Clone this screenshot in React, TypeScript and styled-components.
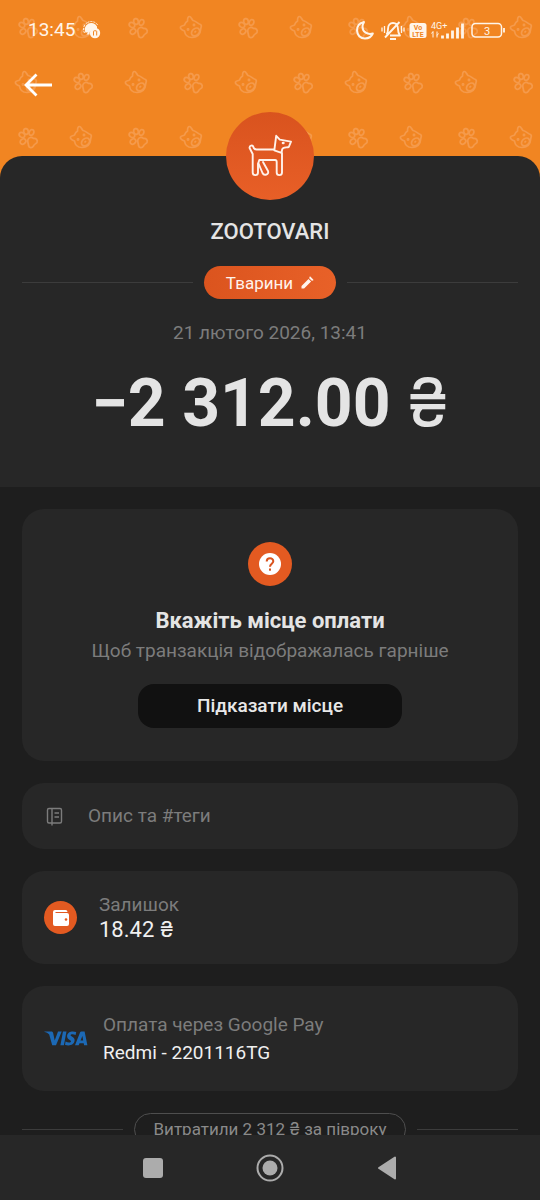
import React from "react";
import styled, { createGlobalStyle } from "styled-components";

const Global = createGlobalStyle`
  *, *::before, *::after { box-sizing: border-box; }
  body { margin: 0; background: #1e1e1e; }
  body, button, input { font-family: Roboto, Inter, "Noto Sans", sans-serif; }
  h1, h2, p { margin: 0; font-weight: 400; }
`;

const Screen = styled.div`
  height: 100vh;
  display: flex;
  flex-direction: column;
  color: #e4e4e4;
  background: #1e1e1e;
`;

const Content = styled.main`
  flex: 1;
  min-height: 0;
  overflow-y: auto;
  scrollbar-width: none;
`;

const Hero = styled.section`
  position: relative;
  isolation: isolate;
  background: #f18522;
`;

const HeroPattern = styled.svg`
  position: absolute;
  inset: 0;
  z-index: -1;
  width: 100%;
  height: 100%;
`;

const StatusBar = styled.div`
  display: flex;
  align-items: center;
  height: 60px;
  padding: 0 33px 0 28px;
  color: #fff5ea;
`;

const Clock = styled.time`
  font-size: 19px;
  line-height: 24px;
  margin-right: 8px;
`;

const StatusIcons = styled.div`
  display: flex;
  align-items: center;
  margin-left: auto;
`;

const AppBar = styled.header`
  display: flex;
  align-items: center;
  height: 50px;
  padding: 0 16px;
  margin-bottom: 46px;
`;

const BackButton = styled.button`
  display: grid;
  place-items: center;
  width: 44px;
  height: 44px;
  padding: 0;
  border: 0;
  background: none;
  color: #fff;
`;

const Sheet = styled.div`
  display: flex;
  flex-direction: column;
  align-items: center;
  padding: 0 22px 43px;
  border-radius: 22px 22px 0 0;
  background: #272727;
`;

const Avatar = styled.div`
  display: grid;
  place-items: center;
  width: 88px;
  height: 88px;
  margin-top: -44px;
  border-radius: 50%;
  background: linear-gradient(#d9531e, #e85f27);
`;

const Merchant = styled.h1`
  margin-top: 18px;
  font-size: 22px;
  line-height: 28px;
  font-weight: 500;
`;

const RuledRow = styled.div<{ $top: number }>`
  display: flex;
  align-items: center;
  align-self: stretch;
  gap: 11px;
  margin-top: ${(p) => p.$top}px;

  &::before, &::after {
    content: "";
    flex: 1;
    height: 1px;
    background: #3c3c3c;
  }
`;

const CategoryButton = styled.button`
  display: flex;
  align-items: center;
  gap: 8px;
  height: 33px;
  padding: 0 22px;
  border: 0;
  border-radius: 17px;
  background: linear-gradient(90deg, #db541e, #e86128);
  color: #fff3ec;
  font-size: 17px;
  line-height: 24px;
`;

const DateLine = styled.p`
  margin-top: 20px;
  font-size: 19px;
  line-height: 28px;
  color: #7c7c7c;
`;

const Amount = styled.p`
  margin-top: 15px;
  font-size: 66px;
  line-height: 80px;
  font-weight: 700;
  white-space: nowrap;
`;

const Currency = styled.span`
  font-family: Inter, sans-serif;
  font-weight: 400;
`;

const Cards = styled.div`
  display: flex;
  flex-direction: column;
  gap: 22px;
  padding: 22px 22px 0;
`;

const PlaceCard = styled.section`
  display: flex;
  flex-direction: column;
  align-items: center;
  padding: 33px 22px;
  border-radius: 22px;
  background: #272727;
`;

const RoundIcon = styled.div<{ $size: number }>`
  display: grid;
  place-items: center;
  flex: none;
  width: ${(p) => p.$size}px;
  height: ${(p) => p.$size}px;
  border-radius: 50%;
  background: #e35a21;
`;

const PlaceTitle = styled.h2`
  margin-top: 20px;
  font-size: 22px;
  line-height: 30px;
  font-weight: 700;
`;

const PlaceHint = styled.p`
  font-size: 19px;
  line-height: 30px;
  color: #7c7c7c;
`;

const PlaceButton = styled.button`
  width: 264px;
  height: 44px;
  margin-top: 18px;
  border: 0;
  border-radius: 16px;
  background: #111;
  color: #e8e8e8;
  font-size: 19px;
  line-height: 28px;
  font-weight: 500;
`;

const RowCard = styled.section<{ $height: number; $gap: number }>`
  display: flex;
  align-items: center;
  gap: ${(p) => p.$gap}px;
  min-height: ${(p) => p.$height}px;
  padding: 0 22px;
  border-radius: 22px;
  background: #272727;
`;

const NoteRow = styled(RowCard).attrs({ as: "label" })`
  color: #7c7c7c;
`;

const NoteInput = styled.input`
  flex: 1;
  min-width: 0;
  padding: 0;
  border: 0;
  outline: 0;
  background: none;
  color: #e4e4e4;
  font-size: 19px;
  line-height: 28px;

  &::placeholder { color: #7c7c7c; opacity: 1; }
`;

const RowLabel = styled.p`
  font-size: 19px;
  line-height: 24px;
  color: #7c7c7c;
`;

const RowValue = styled.p<{ $size: number; $line: number }>`
  font-size: ${(p) => p.$size}px;
  line-height: ${(p) => p.$line}px;
  color: #f0f0f0;
`;

const PaymentInfo = styled.div`
  padding-top: 4px;
`;

const SpentPill = styled.p`
  height: 33px;
  padding: 0 19px;
  border: 1px solid #4e4e4e;
  border-radius: 17px;
  font-size: 17px;
  line-height: 31px;
  color: #8a8a8a;
`;

const NavBar = styled.nav`
  display: flex;
  flex: none;
  justify-content: center;
  align-items: center;
  gap: 73px;
  height: 65px;
  background: #272727;
`;

const NavButton = styled.button`
  display: grid;
  place-items: center;
  width: 44px;
  height: 44px;
  padding: 0;
  border: 0;
  background: none;
  color: #acacac;
`;

function Paw({ x, y }: { x: number; y: number }) {
  return (
    <g transform={`translate(${x} ${y})`}>
      <ellipse cx="-6" cy="-3" rx="3" ry="2.300" transform="rotate(35 -6 -3)" />
      <ellipse cx="-2" cy="-6.500" rx="2.300" ry="2.900" transform="rotate(-12 -2 -6.500)" />
      <ellipse cx="3.500" cy="-5.500" rx="2.300" ry="3" transform="rotate(25 3.500 -5.500)" />
      <ellipse cx="-5" cy="3.500" rx="3" ry="2.400" transform="rotate(-35 -5 3.500)" />
      <path d="M0 1.500C1 -1 4 -1 5.500 .5C8 0 10 2 9 4.500C8 6 6 6 5.500 8C4 10.500 1 10 .5 7.500C.5 5 -1 4 0 1.500Z" />
    </g>
  );
}

function Pup({ x, y }: { x: number; y: number }) {
  return (
    <g transform={`translate(${x} ${y})`}>
      <path d="M-3.500 -7C-3.500 -9 -3 -11.500 -1.500 -11.500C0 -11.500 .5 -9 2 -7.500C5 -7 7 -4 9.500 -3.500C11.500 -2.500 9.500 0 9.500 2C9.500 6 6 9.500 1 9.500C-3 9.500 -6 7 -6.500 3C-8 2.500 -11 1 -10.500 -1C-10 -2.500 -7.500 -2 -6.500 -3C-6 -5 -5 -6 -3.500 -7Z" />
      <ellipse cx="4.500" cy="4" rx="4.500" ry="3.300" transform="rotate(-40 4.500 4)" />
      <circle cx="-3" cy="1.500" r=".6" />
      <circle cx="3" cy="-3" r=".6" />
      <path d="M3.500 4.500l1.500 -1.500" />
    </g>
  );
}

function Pattern() {
  return (
    <HeroPattern aria-hidden="true">
      <defs>
        <pattern id="pets" width="110" height="110" patternUnits="userSpaceOnUse">
          <g fill="none" stroke="#f59a4b" strokeWidth="1.700" strokeLinejoin="round">
            <Paw x={28} y={28} />
            <Pup x={81} y={28} />
            <Pup x={26} y={83} />
            <Paw x={83} y={83} />
          </g>
        </pattern>
      </defs>
      <rect width="100%" height="100%" fill="url(#pets)" />
    </HeroPattern>
  );
}

function NotificationIcon() {
  return (
    <svg width="18" height="18" viewBox="0 0 18 18" fill="currentColor">
      <path d="M1.500 12A7.600 7.600 0 0 1 15 4.500" fill="none" stroke="currentColor" strokeWidth="1" strokeDasharray="2 1" />
      <path d="M2.500 11.500A6 6 0 0 1 14 5.500L14 8A6 6 0 0 0 6.300 13.500H3.500L5 11.500Z" />
      <circle cx="12" cy="12" r="5.200" />
      <path d="M10.500 14.500V10.500Q10.500 9.800 11.200 9.800H13Q13.700 9.800 13.700 10.500V14.500" fill="none" stroke="#f18522" strokeWidth="1" />
    </svg>
  );
}

function SystemIcons() {
  return (
    <svg width="152" height="24" viewBox="0 0 152 24" fill="none" stroke="currentColor" role="img" aria-label="Не турбувати, без звуку, VoLTE, 4G+, батарея 3%">
      <path d="M9 4C4.500 5 2 8.500 2 12.500C2 17 5.500 20.500 10 20.500C13.500 20.500 16.500 18.500 17.800 15.500C12.500 17 7.500 14 7.500 9C7.500 7 8 5.500 9 4Z" strokeWidth="2" strokeLinejoin="round" />
      <path d="M31.500 16.500C33 15 33 13.500 33 11C33 7.500 35 5 38 5C41 5 43 7.500 43 11C43 14 43.500 15.500 45 17.500H35M35 21h6M30 19.500L44.500 4" strokeWidth="1.900" strokeLinejoin="round" />
      <path d="M27 9.500v4M29.500 8v7M46.500 8v7M49 9.500v4" strokeWidth="1.300" />
      <rect x="54.500" y="5" width="17" height="15" rx="2.500" fill="currentColor" stroke="none" />
      <text x="63" y="12" fontSize="7" fontWeight="700" fill="#f18522" stroke="none" textAnchor="middle">Vo</text>
      <text x="63" y="18.500" fontSize="7" fontWeight="700" fill="#f18522" stroke="none" textAnchor="middle">LTE</text>
      <text x="76" y="10.500" fontSize="9" fill="currentColor" stroke="none">4G+</text>
      <path d="M78 13.500v6M76.500 15.500L78 13.500M82 19.500v-6M83.500 15.500L82 17.500" strokeWidth="1" />
      <path d="M87.500 20.500v-3M92.500 20.500v-5M97.500 20.500v-8M102.500 20.500v-11M107.500 20.500v-15" strokeWidth="2.800" />
      <rect x="117" y="5.500" width="29.500" height="13.500" rx="3.500" strokeWidth="1.500" />
      <path d="M149 10v4.500" strokeWidth="1.800" />
      <text x="132" y="16.500" fontSize="11" fill="currentColor" stroke="none" textAnchor="middle">3</text>
    </svg>
  );
}

function Dog() {
  return (
    <svg width="44" height="44" viewBox="0 0 44 44" fill="none" stroke="#fff2ea" strokeWidth="1.900" strokeLinejoin="round" strokeLinecap="round">
      <path d="M26.300 15.500H8.500C6.500 15.500 6 15 5.300 12.700C4.700 10.700 1.200 11.500 1.600 14L4.700 20V38.500C4.700 42 10 42 10 38.500V30L11.300 26H27C28.300 26 28.700 27 28.700 28V38.500C28.700 42 34 42 34 38.500V19.200" />
      <path d="M10.500 29.500L14.500 39C16 42.300 21.500 40.500 20 37L15 28" />
      <path d="M28.200 1.800L31.800 5.600L43 7.600L40.800 13C38 13.700 35 12.800 34.200 15.300L33.500 18.800L26.300 16.300Z" />
      <path d="M35 9h.4" strokeWidth="2.600" />
    </svg>
  );
}

function Visa() {
  return (
    <svg width="44" height="15" viewBox="0 0 44 15" fill="#1c69b5" role="img" aria-label="Visa">
      <path d="M.5 .6H7.300C8.300 .6 9 1.200 9.200 2.200L10.700 9.500L14 .6H17.700L12 14.200H8.200L5.200 3.400C3.800 2.200 2.300 1.400 .5 1.100Z" />
      <path d="M19 .6H22.500L19.900 14.200H16.400Z" />
      <path d="M32.200 1L31.600 4C29.600 3.200 26.700 2.900 26.600 4.300C26.500 5.600 31 6 30.600 9.600C30.100 14.400 24.800 15.200 21 13.700L21.600 10.600C24 11.900 27 11.900 27 10.300C27 8.700 22.800 8.500 23.100 4.800C23.500 .7 28.300 -.4 32.200 1Z" />
      <path fillRule="evenodd" d="M37.400 .6H40.600L43.400 14.200H40.100L39.700 12.200H35.500L34.700 14.200H31L36 1.600C36.300 .9 36.800 .6 37.400 .6ZM38.400 5L36.500 9.500H39.200Z" />
    </svg>
  );
}

export default function App() {
  return (
    <Screen>
      <Global />
      <Content>
        <Hero>
          <Pattern />
          <StatusBar>
            <Clock>13:45</Clock>
            <NotificationIcon />
            <StatusIcons>
              <SystemIcons />
            </StatusIcons>
          </StatusBar>
          <AppBar>
            <BackButton aria-label="Назад">
              <svg width="30" height="24" viewBox="0 0 30 24" fill="none" stroke="currentColor" strokeWidth="2.800">
                <path d="M29 12H3M13.500 1.500L3 12L13.500 22.500" />
              </svg>
            </BackButton>
          </AppBar>
          <Sheet>
            <Avatar>
              <Dog />
            </Avatar>
            <Merchant>ZOOTOVARI</Merchant>
            <RuledRow $top={20}>
              <CategoryButton>
                Тварини
                <svg width="13" height="13" viewBox="0 0 13 13" fill="currentColor" aria-hidden="true">
                  <path d="M.5 9.900V12.500H3.100L10.100 5.500L7.500 2.900ZM12.200 3.400L9.600 .8C9.300 .5 8.900 .5 8.600 .8L8.200 2.200L10.800 4.800L12.200 4.400C12.500 4.100 12.500 3.700 12.200 3.400Z" />
                </svg>
              </CategoryButton>
            </RuledRow>
            <DateLine>21 лютого 2026, 13:41</DateLine>
            <Amount>
              −2 312.00 <Currency>₴</Currency>
            </Amount>
          </Sheet>
        </Hero>

        <Cards>
          <PlaceCard>
            <RoundIcon $size={44}>
              <svg width="22" height="22" viewBox="0 0 22 22" aria-hidden="true">
                <circle cx="11" cy="11" r="11" fill="#fff" />
                <path d="M7.700 8.500C7.700 4.200 14.300 4.200 14.300 8.300C14.300 10.700 11 10.900 11 13.800" fill="none" stroke="#d9531e" strokeWidth="2" />
                <rect x="10" y="15.500" width="2" height="2.200" fill="#d9531e" />
              </svg>
            </RoundIcon>
            <PlaceTitle>Вкажіть місце оплати</PlaceTitle>
            <PlaceHint>Щоб транзакція відображалась гарніше</PlaceHint>
            <PlaceButton>Підказати місце</PlaceButton>
          </PlaceCard>

          <NoteRow $height={66} $gap={22}>
            <svg width="22" height="22" viewBox="0 0 22 22" fill="none" stroke="currentColor" strokeWidth="1.400" aria-hidden="true">
              <path d="M5 3.500H16Q17.500 3.500 17.500 5V16.500Q17.500 18 16 18H5Q3.500 18 3.500 16.500V5Q3.500 3.500 5 3.500ZM8 3.500V20.500M10.500 8H15M10.500 12H15" />
            </svg>
            <NoteInput aria-label="Опис та #теги" placeholder="Опис та #теги" />
          </NoteRow>

          <RowCard $height={93} $gap={22}>
            <RoundIcon $size={33}>
              <svg width="18" height="18" viewBox="0 0 18 18" aria-hidden="true">
                <path d="M3 1H13.500Q15.500 1 15.500 3H3.500V4H15Q17 4 17 6V15Q17 17 15 17H3Q1 17 1 15V3Q1 1 3 1Z" fill="#fff" />
                <circle cx="14" cy="10.500" r="1.300" fill="#e35a21" />
              </svg>
            </RoundIcon>
            <div>
              <RowLabel>Залишок</RowLabel>
              <RowValue $size={22} $line={24}>
                18.42 <Currency>₴</Currency>
              </RowValue>
            </div>
          </RowCard>

          <RowCard $height={105} $gap={15}>
            <Visa />
            <PaymentInfo>
              <RowLabel>Оплата через Google Pay</RowLabel>
              <RowValue $size={19} $line={32}>Redmi - 2201116TG</RowValue>
            </PaymentInfo>
          </RowCard>

          <RuledRow $top={0}>
            <SpentPill>
              Витратили 2 312 <Currency>₴</Currency> за півроку
            </SpentPill>
          </RuledRow>
        </Cards>
      </Content>

      <NavBar>
        <NavButton aria-label="Останні програми">
          <svg width="20" height="20"><rect width="20" height="20" rx="3" fill="currentColor" /></svg>
        </NavButton>
        <NavButton aria-label="Головний екран">
          <svg width="28" height="28" viewBox="0 0 28 28">
            <circle cx="14" cy="14" r="12.500" fill="none" stroke="currentColor" strokeWidth="2" />
            <circle cx="14" cy="14" r="7.500" fill="currentColor" />
          </svg>
        </NavButton>
        <NavButton aria-label="Назад у системі">
          <svg width="20" height="24" viewBox="0 0 20 24">
            <path d="M18 1.500V22.500L2 12Z" fill="currentColor" stroke="currentColor" strokeWidth="2" strokeLinejoin="round" />
          </svg>
        </NavButton>
      </NavBar>
    </Screen>
  );
}
